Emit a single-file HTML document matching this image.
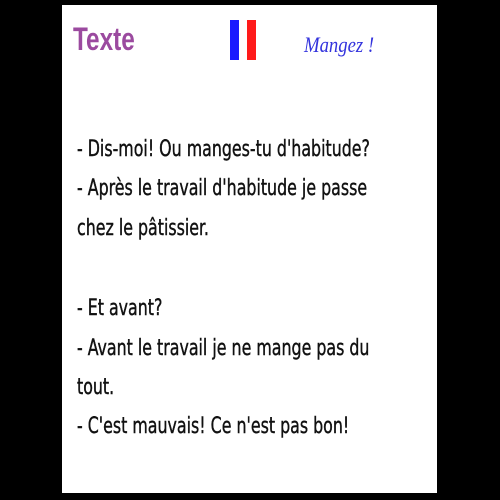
<!DOCTYPE html>
<html><head><meta charset="utf-8"><style>
html,body{margin:0;padding:0;background:#000;width:500px;height:500px;overflow:hidden}
#p{position:absolute;left:62px;top:5px;width:375px;height:488px;background:#fff}
.l{position:absolute;left:15px;font-family:"DejaVu Sans Condensed","DejaVu Sans",sans-serif;font-size:22px;color:#111;white-space:nowrap;transform:scaleX(0.8);transform-origin:0 0;-webkit-text-stroke:0.4px #111}
#t{position:absolute;left:11px;top:16px;font-family:"Liberation Sans",sans-serif;font-weight:bold;font-size:32px;color:#9b4a9f;transform:scaleX(0.76);transform-origin:0 0}
#m{position:absolute;left:242px;top:27px;font-family:"Liberation Serif",serif;font-style:italic;font-size:22px;color:#3333dd;transform:scaleX(0.85);transform-origin:0 0}
.f{position:absolute;top:15px;width:9px;height:40px}
</style></head><body>
<div id="p">
<div id="t">Texte</div>
<div class="f" style="left:168px;background:#1a1aff"></div>
<div class="f" style="left:185px;background:#ff1a1a"></div>
<div id="m">Mangez !</div>
<div class="l" style="top:132px">- Dis-moi! Ou manges-tu d'habitude?</div>
<div class="l" style="top:171px">- Après le travail d'habitude je passe</div>
<div class="l" style="top:211px">chez le pâtissier.</div>
<div class="l" style="top:291px">- Et avant?</div>
<div class="l" style="top:331px">- Avant le travail je ne mange pas du</div>
<div class="l" style="top:370px">tout.</div>
<div class="l" style="top:409px">- C'est mauvais! Ce n'est pas bon!</div>
</div>
</body></html>
